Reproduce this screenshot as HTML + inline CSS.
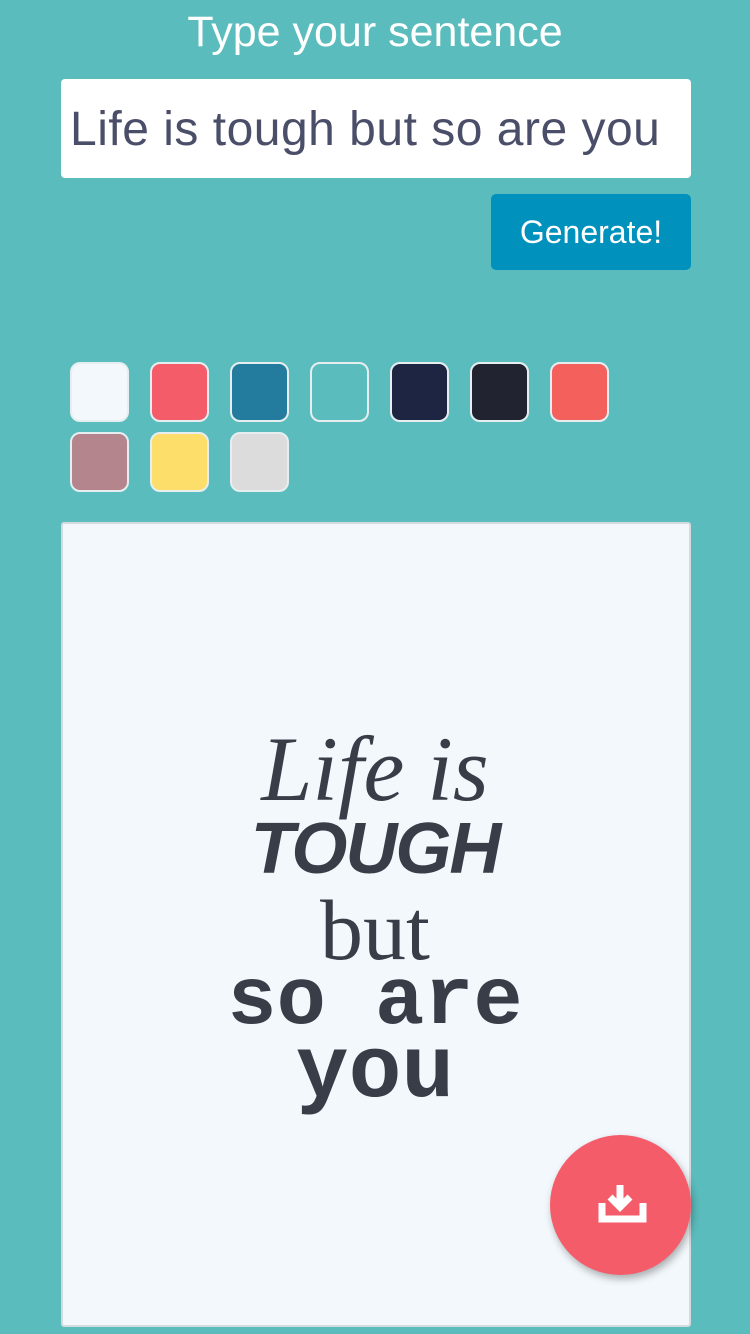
<!DOCTYPE html>
<html><head><meta charset="utf-8"><style>
*{margin:0;padding:0;box-sizing:border-box}
body{width:750px;height:1334px;background:#5bbcbd;font-family:"Liberation Sans",sans-serif;position:relative;overflow:hidden}
.t{position:absolute;top:8px;width:750px;text-align:center;color:#fff;font-size:43px}
.in{position:absolute;left:61px;top:79px;width:630px;height:99px;background:#fff;border-radius:4px;color:#4a4e69;font-size:48px;padding:23px 0 0 9px;letter-spacing:0.5px}
.btn{position:absolute;left:491px;top:194px;width:200px;height:76px;background:#0091bc;border-radius:5px;color:#fff;font-size:32px;text-align:center;line-height:76px}
.sw{position:absolute;width:59px;height:60px;border:2px solid #e6eef0;border-radius:10px}
.cv{position:absolute;left:61px;top:522px;width:630px;height:805px;background:#f3f8fc;border:2px solid #d4dadd;border-radius:3px}
.q{position:absolute;width:750px;text-align:center;color:#393d48;white-space:nowrap}
.fab{position:absolute;left:550px;top:1135px;width:141px;height:140px;border-radius:50%;background:#f45c6a;box-shadow:2px 4px 8px rgba(0,0,0,.3)}
</style></head><body>
<div class="t">Type your sentence</div>
<div class="in">Life is tough but so are you</div>
<div class="btn">Generate!</div>
<div class="sw" style="left:70px;top:362px;background:#f3f8fc"></div>
<div class="sw" style="left:150px;top:362px;background:#f45c6a"></div>
<div class="sw" style="left:230px;top:362px;background:#237c9e"></div>
<div class="sw" style="left:310px;top:362px;background:#5bbcbd"></div>
<div class="sw" style="left:390px;top:362px;background:#1d2543"></div>
<div class="sw" style="left:470px;top:362px;background:#212430"></div>
<div class="sw" style="left:550px;top:362px;background:#f4605c"></div>
<div class="sw" style="left:70px;top:432px;background:#b4858c"></div>
<div class="sw" style="left:150px;top:432px;background:#fede6a"></div>
<div class="sw" style="left:230px;top:432px;background:#dcdcdc"></div>
<div class="cv"></div>
<div class="q" style="top:716px;font-family:'Liberation Serif',serif;font-style:italic;font-size:92px;left:0">Life is</div>
<div class="q" style="top:808px;font-family:'Liberation Sans',sans-serif;font-weight:bold;font-style:italic;font-size:72px;left:0;letter-spacing:-2px">TOUGH</div>
<div class="q" style="top:880px;font-family:'Liberation Serif',serif;font-size:86px;left:0">but</div>
<div class="q" style="top:955px;font-family:'Liberation Mono',monospace;font-weight:bold;font-size:82px;left:0">so are</div>
<div class="q" style="top:1024px;font-family:'Liberation Mono',monospace;font-weight:bold;font-size:88px;left:0">you</div>
<div class="fab"><svg width="141" height="140" viewBox="0 0 141 140"><path d="M70 50v22M60 62l10 10 10-10" stroke="#fff" stroke-width="7" fill="none"/><path d="M52 68v16h41V68" stroke="#fff" stroke-width="7" fill="none"/></svg></div>
</body></html>
